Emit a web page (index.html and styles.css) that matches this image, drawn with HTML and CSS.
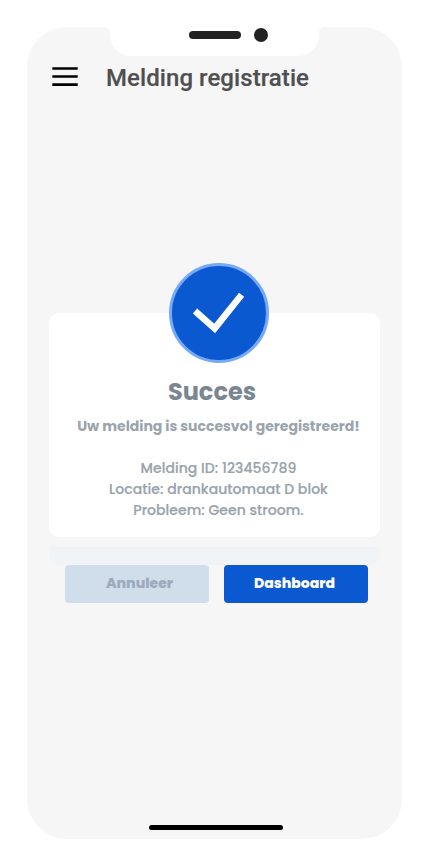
FILE: index.html
```html
<!DOCTYPE html>
<html lang="nl">
<head>
<meta charset="utf-8">
<title>Melding registratie</title>
<link rel="stylesheet" href="styles.css">
</head>
<body>
<main class="phone">
  <svg class="notch" width="375" height="29" viewBox="0 0 375 29" aria-hidden="true">
    <path fill="#fff" d="M77 0C81 0 83 2 83 6C83 19 91 29 105 29H270C284 29 292 19 292 6C292 2 294 0 298 0Z"/>
    <rect x="162" y="4" width="52" height="8" rx="4" fill="#222"/>
    <circle cx="234" cy="8" r="7" fill="#222"/>
  </svg>
  <header class="header">
    <svg class="menu" width="26" height="20" viewBox="0 0 26 20" aria-hidden="true">
      <path d="M.3 1.5H25.7M.3 9.5H25.7M.3 17.6H25.7" stroke="#000" stroke-width="2.6"/>
    </svg>
    <h1 class="title">Melding registratie</h1>
  </header>
  <section class="card">
    <svg class="badge" width="100" height="100" viewBox="0 0 100 100" aria-hidden="true">
      <circle cx="50" cy="50" r="48.5" fill="#0b59d1" stroke="#76a9f7" stroke-width="3"/>
      <path d="M26 48L45.7 65.4L72.6 31.8" fill="none" stroke="#fff" stroke-width="6.6"/>
    </svg>
    <h2 class="heading">Succes</h2>
    <p class="message">Uw melding is succesvol geregistreerd!</p>
    <div class="details">
      <p>Melding ID: 123456789</p>
      <p>Locatie: drankautomaat D blok</p>
      <p>Probleem: Geen stroom.</p>
    </div>
  </section>
  <div class="strip"></div>
  <div class="actions">
    <button class="button cancel">Annuleer</button>
    <button class="button primary">Dashboard</button>
  </div>
  <div class="home"></div>
</main>
</body>
</html>
```
FILE: styles.css
```css
* { box-sizing: border-box; }
body { margin: 0; background: #fff; font-family: Poppins, Inter, "Noto Sans", sans-serif; }
h1, h2, p { margin: 0; white-space: nowrap; }
.phone { width: 375px; height: 812px; margin: 27px 0 0 27px; background: #f6f6f6; border-radius: 40px; display: flex; flex-direction: column; overflow: hidden; }
.notch, .menu, .badge { display: block; flex: none; }
.header { display: flex; align-items: center; gap: 28px; height: 42px; padding-left: 25px; }
.title { font: 500 24px/30px Roboto, sans-serif; letter-spacing: .07px; color: #4f4f4f; -webkit-text-stroke: .2px #4f4f4f; padding-top: 2px; }
.card { width: 331px; height: 224px; margin: 215px 0 0 22px; background: #fff; border-radius: 10px; display: flex; flex-direction: column; align-items: center; flex: none; }
.badge { margin: -50px 0 0 8px; }
.heading { margin: 11px 5px 0 0; font-size: 24px; line-height: 36px; font-weight: 700; color: #7a8691; }
.message { margin: 6px 0 0 8px; font-size: 14px; line-height: 21px; font-weight: 700; color: #9aa4ac; }
.details { margin: 21px 0 0 8px; font-size: 14px; line-height: 21px; font-weight: 500; letter-spacing: .05px; color: #98a3ac; -webkit-text-stroke: .2px #98a3ac; text-align: center; }
.strip { width: 331px; height: 18px; flex: none; margin: 10px 0 0 22px; background: #f0f4f7; border-radius: 0 0 10px 10px; }
.actions { display: flex; gap: 15px; padding-left: 38px; }
.button { width: 144px; height: 38px; border: 0; border-radius: 4px; font: 800 14px/20px Poppins, Inter, sans-serif; padding: 0 0 3px; }
.cancel { background: #d0ddea; color: #9babbc; padding-left: 5px; }
.primary { background: #0b59d1; color: #fff; padding-right: 3px; }
.home { width: 134px; height: 5px; flex: none; border-radius: 3px; background: #000; margin: auto 0 9px 122px; }
```
